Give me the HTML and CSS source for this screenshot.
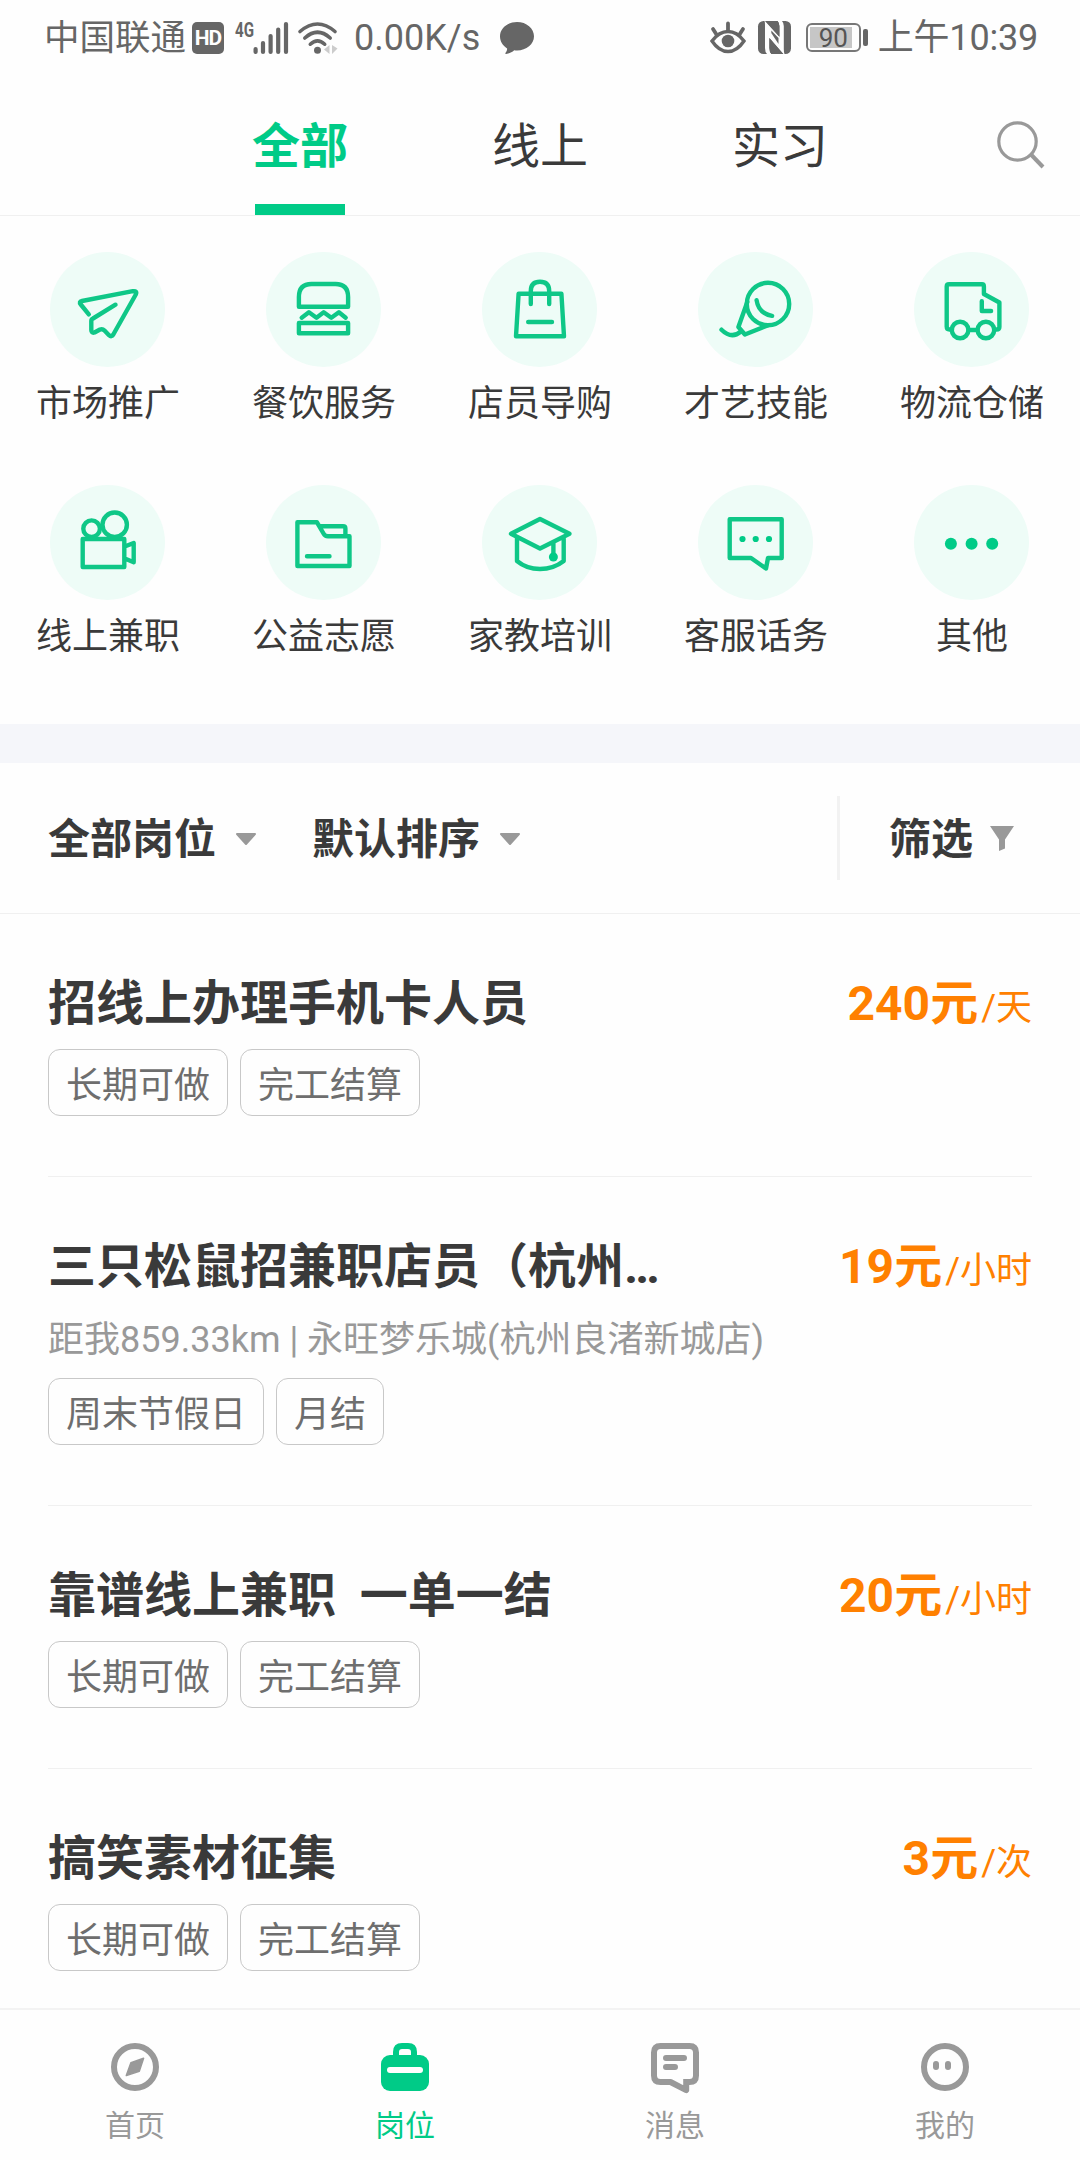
FILE: index.html
```html
<!DOCTYPE html>
<html lang="zh-CN">
<head>
<meta charset="utf-8">
<title>岗位</title>
<link rel="stylesheet" href="styles.css">
</head>
<body>
<div class="screen">
  <div class="status">
    <span class="status-text carrier">中国联通</span>
    <span class="hd">HD</span>
    <svg class="signal" width="54" height="34" viewBox="0 0 54 34">
      <text x="0" y="16" textLength="19" lengthAdjust="spacingAndGlyphs">4G</text>
      <g stroke="#666" stroke-width="4.2" stroke-linecap="round"><path d="M20.6 31v-3M28 31V22M35.6 31V15M43.2 31V8.500M51 31V3"/></g>
    </svg>
    <svg class="wifi" width="42" height="34" viewBox="0 0 42 34">
      <g fill="none" stroke="#666" stroke-width="3.6" stroke-linecap="round"><path d="M3 10.500Q20.500-4.500 38 10.500M7.800 17Q20.500 5.500 33.200 17M13.300 23.200Q20.500 16.500 27.700 23.200"/></g>
      <circle cx="20.500" cy="29.200" r="3.500" fill="#666"/>
      <path d="M32.500 24v9l-5.500-4.500zM35 24v9l5.500-5.500z" fill="#ccc"/>
    </svg>
    <span class="status-text speed">0.00K/s</span>
    <svg class="bubble" width="34" height="32" viewBox="0 0 34 32"><path d="M17 0C26.500 0 34 6.300 34 14.300S26.500 28.500 17 28.500c-1 0-2-.1-2.800-.2C12 30.500 9 31.600 6.200 31.900c-1 .1-1.200-.6-.6-1.200 1.200-1.200 1.600-2.700 1.500-4.300C2.800 23.800 0 19.400 0 14.300 0 6.300 7.500 0 17 0z" fill="#666"/></svg>
    <svg class="eye" width="36" height="33" viewBox="0 0 36 33">
      <path d="M2 20Q9 10.500 18 10.500T34 20Q27 30.500 18 30.500T2 20z" fill="none" stroke="#666" stroke-width="3.400"/>
      <circle cx="18" cy="20" r="6.300" fill="#666"/>
      <path d="M18 2.500v7M3 8l3.500 5.500M33 8l-3.500 5.500" stroke="#666" stroke-width="3.800" stroke-linecap="round"/>
    </svg>
    <svg class="nfc" width="34" height="33" viewBox="0 0 34 33">
      <rect width="33" height="33" rx="5.500" fill="#666"/>
      <path d="M6.500 0Q7 1 7 4V27Q7 31 9 33H13.500Q11.400 31 11.400 27V17L25.300 33H26.500Q25.800 31 25.800 28V5Q25.800 2 24 0H19.500Q21.400 2 21.400 5V15.500L7.500 0z" fill="#fefefe"/>
      <path d="M7 0H19.500Q21.400 2 21.400 5V16zM11.400 17L25.300 33H13.500Q11.400 31 11.400 27z" fill="#666"/>
      <path d="M11.400 6L21.400 16.300V26.500L11.400 16z" fill="#fefefe"/>
      <path d="M13.300 9.500L20.500 17V23L13.300 12z" fill="#666"/>
    </svg>
    <span class="battery"><span class="battery-box"><span class="battery-fill">90</span></span><span class="battery-nub"></span></span>
    <span class="status-text time">上午10:39</span>
  </div>

  <div class="tabs">
    <div class="tab tab-on">全部</div>
    <div class="tab">线上</div>
    <div class="tab">实习</div>
    <svg class="search" width="48" height="48" viewBox="0 0 48 48"><g fill="none" stroke="#999"><circle cx="20.500" cy="20.500" r="18.700" stroke-width="3.200"/><path d="M33.500 33L46 46" stroke-width="4"/></g></svg>
  </div>

  <div class="cats">
    <div class="cat"><svg class="cat-icon" viewBox="-.5 0 115 115"><path d="M38.300 62.300L30.300 52.500Q28 49.700 31.500 49L82.300 39.200Q87 38.500 85.300 42.500L62.800 82.500Q61 85.500 58.500 83.200L54 78.500Q52 76.500 49.500 77.500L44 80.500Q40.800 81.500 40.800 78V69Q40.800 67.300 42.500 66.500L65 52.700"/></svg><span>市场推广</span></div>
    <div class="cat"><svg class="cat-icon" viewBox="-.5 0 115 115"><path d="M32.400 54.700V45Q32.400 32 45 32H69Q81.600 32 81.600 45V54.700zM35.200 65.700L42.400 60.300 50 65.700 57.200 60.300 64.800 65.700 72.400 60.300 79.200 65.700M32.400 71H81.600V81.300H32.400z"/></svg><span>餐饮服务</span></div>
    <div class="cat"><svg class="cat-icon" viewBox="-.5 0 115 115"><path d="M36.100 41.700H78.900L81.500 84.300H33.500zM48.300 52V39Q48.300 29.700 57.500 29.700T66.700 39V52M45.700 70H69.500"/></svg><span>店员导购</span></div>
    <div class="cat"><svg class="cat-icon" viewBox="-.5 0 115 115"><circle cx="69.500" cy="52" r="21.200"/><path d="M48.800 50L39.900 75 46.400 82.500 69 73.500M23 77.700Q33 87.500 42.500 79.500M58.100 48.300Q60 61.500 73.600 63.800"/></svg><span>才艺技能</span></div>
    <div class="cat"><svg class="cat-icon" viewBox="-.5 0 115 115"><path d="M37.500 77.500H35Q32.200 77.500 32.200 74.500V34.500Q32.200 32.300 34.500 32.300H67.500Q69.400 32.300 69.400 34.500V42L84.900 50.500V75Q84.900 77.500 82 77.500H79.700M54 78H63M67.300 49.300V59H76.600"/><circle cx="45.600" cy="78" r="8.300"/><circle cx="71.400" cy="78" r="8.300"/></svg><span>物流仓储</span></div>
    <div class="cat"><svg class="cat-icon" viewBox="-.5 0 115 115"><circle cx="41.100" cy="43.700" r="8.300"/><circle cx="64.200" cy="39.700" r="12.200"/><path d="M32.200 54H73.800V82H32.200zM75.500 61L83.200 58V77.200L75.500 74"/></svg><span>线上兼职</span></div>
    <div class="cat"><svg class="cat-icon" viewBox="-.5 0 115 115"><path d="M30.900 37.300H50.500L57 48.500Q58.500 51.300 61.500 51.300H83V81H30.900zM53.700 41.300H76.500Q78.900 41.300 78.900 43.500V50.300M40.500 71.300H63"/></svg><span>公益志愿</span></div>
    <div class="cat"><svg class="cat-icon" viewBox="-.5 0 115 115"><path d="M57.500 34L87 48.700 57.500 63.500 28.500 48.700zM34.500 53V76Q44 84 57.500 84T81.200 76V53M70.900 57V70"/><circle class="solid" cx="70.900" cy="72" r="4.500"/></svg><span>家教培训</span></div>
    <div class="cat"><svg class="cat-icon" viewBox="-.5 0 115 115"><path d="M31.200 34.300H83.200V73H69.500L67.500 83.500 52.500 73H31.200z"/><g class="solid"><circle cx="44" cy="54" r="3.100"/><circle cx="57.200" cy="54" r="3.100"/><circle cx="70.500" cy="54" r="3.100"/></g></svg><span>客服话务</span></div>
    <div class="cat"><svg class="cat-icon" viewBox="-.5 0 115 115"><g class="solid"><circle cx="36.400" cy="58.700" r="6"/><circle cx="57.100" cy="58.700" r="6"/><circle cx="77.700" cy="58.700" r="6"/></g></svg><span>其他</span></div>
  </div>

  <div class="filters">
    <span class="filter"><span>全部岗位</span><svg class="arrow" width="22" height="13" viewBox="0 0 22 13"><path d="M2 1H20L11 11z"/></svg></span>
    <span class="filter"><span>默认排序</span><svg class="arrow" width="22" height="13" viewBox="0 0 22 13"><path d="M2 1H20L11 11z"/></svg></span>
    <span class="filter filter-more"><span>筛选</span><svg class="funnel" width="24" height="25" viewBox="0 0 24 25"><path d="M0 0H24L15 13.500V22.500L9 25V13.500z"/></svg></span>
  </div>

  <div class="jobs">
    <div class="job">
      <div class="job-head"><span class="job-title">招线上办理手机卡人员</span><span class="price">240元<small>/天</small></span></div>
      <div class="tags"><span class="tag">长期可做</span><span class="tag">完工结算</span></div>
    </div>
    <div class="job">
      <div class="job-head"><span class="job-title">三只松鼠招兼职店员（杭州…</span><span class="price">19元<small>/小时</small></span></div>
      <div class="place">距我859.33km | 永旺梦乐城(杭州良渚新城店)</div>
      <div class="tags"><span class="tag">周末节假日</span><span class="tag">月结</span></div>
    </div>
    <div class="job">
      <div class="job-head"><span class="job-title">靠谱线上兼职&nbsp; 一单一结</span><span class="price">20元<small>/小时</small></span></div>
      <div class="tags"><span class="tag">长期可做</span><span class="tag">完工结算</span></div>
    </div>
    <div class="job">
      <div class="job-head"><span class="job-title">搞笑素材征集</span><span class="price">3元<small>/次</small></span></div>
      <div class="tags"><span class="tag">长期可做</span><span class="tag">完工结算</span></div>
    </div>
  </div>

  <div class="nav">
    <div class="nav-item"><svg width="48" height="52" viewBox="0 0 48 52"><circle cx="24" cy="24" r="21" fill="none" stroke="#999" stroke-width="6"/><path d="M32.600 15.300L28.300 28.200 15.300 32.600 19.900 19.800z" fill="#999" stroke="#999" stroke-width="1.500" stroke-linejoin="round"/></svg><span>首页</span></div>
    <div class="nav-item nav-on"><svg width="48" height="52" viewBox="0 0 48 52"><path d="M15 14V9Q15 3 21 3H27Q33 3 33 9V14" fill="none" stroke="#00cb87" stroke-width="6"/><rect y="12" width="48" height="36" rx="9" fill="#00cb87"/><rect x="6" y="24" width="36" height="6" rx="3" fill="#fefefe"/></svg><span>岗位</span></div>
    <div class="nav-item"><svg width="48" height="52" viewBox="0 0 48 52"><g fill="none" stroke="#999" stroke-width="6"><path d="M35 39H38.500Q45 39 45 32.500V9.500Q45 3 38.500 3H9.500Q3 3 3 9.500V32.500Q3 39 9.500 39H19.500L35.200 47.200V36" stroke-linejoin="round"/><path d="M15 15H33M15 24H24" stroke-linecap="round"/></g></svg><span>消息</span></div>
    <div class="nav-item"><svg width="48" height="52" viewBox="0 0 48 52"><circle cx="24" cy="24" r="21" fill="none" stroke="#999" stroke-width="6"/><rect x="12" y="18" width="6" height="9" rx="3" fill="#999"/><rect x="24" y="18" width="6" height="9" rx="3" fill="#999"/></svg><span>我的</span></div>
  </div>
</div>
</body>
</html>
```
FILE: styles.css
```css
* { box-sizing: border-box; }
body {
  margin: 0;
  background: #fefefe;
  color: #3a3a3a;
  font-family: Roboto, "Noto Sans CJK SC", sans-serif;
}
svg { display: block; flex: none; overflow: visible; }
.screen {
  width: 1080px;
  height: 2160px;
  overflow: hidden;
  display: flex;
  flex-direction: column;
}

.status {
  height: 75px;
  padding: 0 42px 0 44px;
  display: flex;
  align-items: center;
  flex: none;
}
.status-text { padding-top: 1px; font-size: 36px; line-height: 75px; color: #666; white-space: nowrap; }
.carrier { font-size: 35.5px; }
.hd {
  width: 32px;
  height: 32px;
  margin-left: 6px;
  border-radius: 5px;
  background: #666;
  color: #fefefe;
  font-size: 21px;
  font-weight: 700;
  line-height: 33px;
  letter-spacing: -1px;
  text-align: center;
}
.signal { margin-left: 11px; }
.signal text { font: 700 21px Roboto, sans-serif; fill: #666; }
.wifi { margin-left: 8px; }
.speed { margin-left: 15px; }
.bubble { margin-left: 20px; }
.eye { margin-left: auto; }
.nfc { margin-left: 12px; }
.battery { margin-left: 14px; display: flex; align-items: center; gap: 2px; }
.battery-box {
  width: 55px;
  height: 29px;
  padding: 2px;
  border: 2px solid #777;
  border-radius: 6px;
}
.battery-fill {
  display: block;
  width: 42px;
  height: 21px;
  padding-left: 9px;
  background: #c6c6c6;
  color: #555;
  font-size: 26px;
  line-height: 22px;
}
.battery-nub { width: 5px; height: 17px; border-radius: 2px; background: #666; }
.time { margin-left: 10px; letter-spacing: -0.2px; }

.tabs {
  height: 141px;
  padding-left: 180px;
  display: flex;
  flex: none;
  border-bottom: 1px solid #f0f0f0;
}
.tab {
  width: 240px;
  display: flex;
  flex-direction: column;
  align-items: center;
  font-size: 48px;
  line-height: 144px;
}
.tab-on { color: #00cb87; font-weight: 700; }
.tab-on::after { content: ""; width: 90px; height: 11px; margin-top: -15px; background: #00cb87; }
.search { margin: 46px 0 0 97px; }

.cats {
  height: 508px;
  padding-top: 36px;
  display: grid;
  grid-template-columns: repeat(5, 216px);
  grid-auto-rows: 233px;
  flex: none;
}
.cat { display: flex; flex-direction: column; align-items: center; font-size: 36px; line-height: 74px; }
.cat-icon {
  width: 115px;
  height: 115px;
  margin-right: 2px;
  border-radius: 50%;
  background: #eefcf7;
  fill: none;
  stroke: #0fc787;
  stroke-width: 4.400;
  stroke-linecap: round;
  stroke-linejoin: round;
}
.solid { fill: #00cb87; stroke: none; }

.filters {
  height: 190px;
  padding: 0 66px 0 48px;
  border-top: 39px solid #f5f6fa;
  border-bottom: 1px solid #f0f0f0;
  display: flex;
  align-items: center;
  gap: 55px;
  flex: none;
}
.filter { height: 84px; display: flex; align-items: center; font-size: 42px; font-weight: 700; line-height: 84px; }
.filter span { padding-top: 4px; }
.filter-more { margin-left: auto; padding-left: 49px; border-left: 3px solid #f2f2f2; }
.arrow { margin-top: 2px; margin-left: 19px; fill: #999; stroke: #999; stroke-width: 2; stroke-linejoin: round; }
.funnel { margin-left: 17px; fill: #999; }

.jobs { flex: 1; min-height: 0; overflow: hidden; padding: 0 48px; }
.job { padding: 54px 0 60px; border-bottom: 1px solid #f0f0f0; }
.job-head { height: 81px; display: flex; justify-content: space-between; align-items: flex-start; }
.job-title { font-size: 48px; font-weight: 700; line-height: 72px; }
.price { font-size: 48px; font-weight: 700; line-height: 71px; color: #ff8000; }
.price small { margin-left: 3px; font-size: 36px; font-weight: 400; line-height: 1; }
.place { height: 66px; margin-top: -6px; margin-bottom: 6px; font-size: 36px; line-height: 68px; color: #999; }
.tags { display: flex; gap: 12px; }
.tag {
  height: 67px;
  padding: 0 17px;
  border: 1px solid #c8c8c8;
  border-radius: 12px;
  font-size: 36px;
  line-height: 72px;
  color: #6e6e6e;
}

.nav {
  height: 152px;
  border-top: 2px solid #f3f3f3;
  display: grid;
  grid-template-columns: repeat(4, 270px);
  flex: none;
}
.nav-item { display: flex; flex-direction: column; align-items: center; padding-top: 33px; font-size: 30px; line-height: 62px; color: #999; }
.nav-on { color: #00cb87; }
```
